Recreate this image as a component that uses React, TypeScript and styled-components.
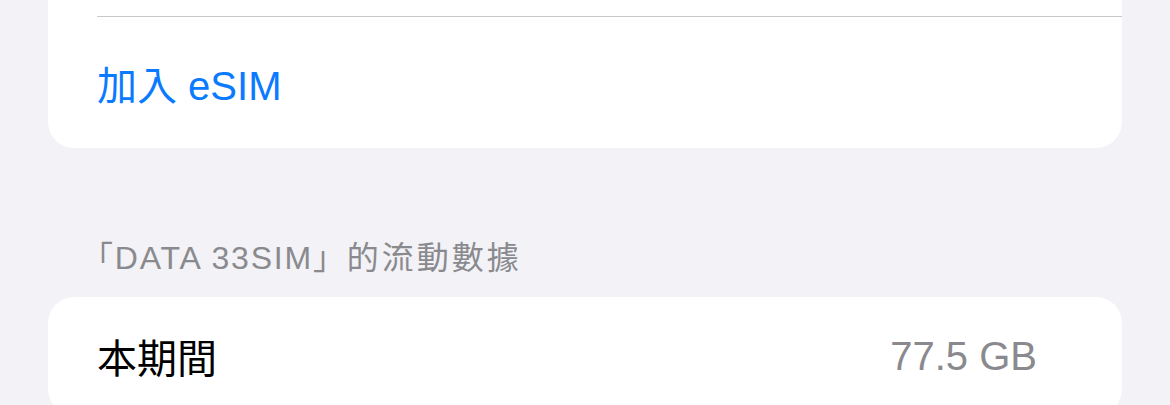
import styled, { createGlobalStyle } from "styled-components";

const GlobalStyle = createGlobalStyle`
  html, body {
    margin: 0;
    padding: 0;
    background: #f2f2f7;
  }
  body {
    font-family: "Liberation Sans", "Noto Sans CJK TC", sans-serif;
    -webkit-font-smoothing: antialiased;
  }
`;

interface RowProps {
  label: string;
  value?: string;
  tint?: boolean;
}

const SettingsRow: React.FC<RowProps> = ({ label, value, tint }) => {
  return (
    <StyledRow>
      <StyledLabel $tint={tint}>{label}</StyledLabel>
      {value && <StyledValue>{value}</StyledValue>}
    </StyledRow>
  );
};

const App = () => {
  return (
    <StyledPage>
      <GlobalStyle />
      <StyledCard $clipped>
        <StyledHiddenRow />
        <StyledSeparator />
        <StyledActionRow>
          <StyledLabel $tint>加入 eSIM</StyledLabel>
        </StyledActionRow>
      </StyledCard>
      <StyledSectionHeader>
        「DATA 33SIM」<StyledHeaderCjk>的流動數據</StyledHeaderCjk>
      </StyledSectionHeader>
      <StyledCard>
        <SettingsRow label="本期間" value="77.5 GB" />
      </StyledCard>
    </StyledPage>
  );
};

export default App;

const StyledPage = styled.div`
  height: 405px;
  overflow: hidden;
  padding: 0 48px;
  background: #f2f2f7;
`;

const StyledCard = styled.div<{ $clipped?: boolean }>`
  background: #ffffff;
  border-radius: 26px;
  margin-top: ${(p) => (p.$clipped ? "-60px" : "0")};
  overflow: hidden;
`;

const StyledHiddenRow = styled.div`
  height: 76px;
`;

const StyledSeparator = styled.div`
  height: 1px;
  margin-left: 49px;
  background: #c8c8cb;
`;

const StyledActionRow = styled.div`
  display: flex;
  align-items: center;
  height: 131px;
  padding-left: 49px;
`;

const StyledRow = styled.div`
  display: flex;
  align-items: center;
  justify-content: space-between;
  height: 118px;
  padding: 0 85px 0 49px;
`;

const StyledLabel = styled.span<{ $tint?: boolean }>`
  font-size: 40px;
  color: ${(p) => (p.$tint ? "#0a7aff" : "#000000")};
  white-space: nowrap;
`;

const StyledValue = styled.span`
  font-size: 40px;
  color: #8a8a8e;
  white-space: nowrap;
`;

const StyledSectionHeader = styled.div`
  padding: 90px 0 19px 33px;
  font-size: 32px;
  line-height: 40px;
  letter-spacing: 1.8px;
  color: #8a8a8e;
  white-space: nowrap;
`;

const StyledHeaderCjk = styled.span`
  letter-spacing: 3px;
`;
